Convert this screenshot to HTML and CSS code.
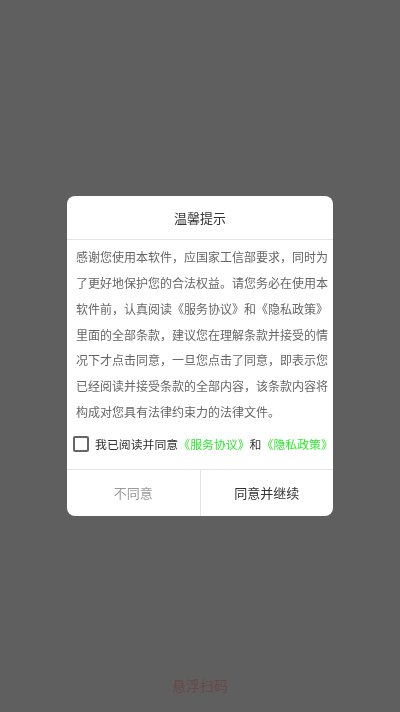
FILE: index.html
```html
<!DOCTYPE html>
<html lang="zh">
<head>
<meta charset="utf-8">
<meta name="viewport" content="width=device-width, initial-scale=1">
<link rel="stylesheet" href="styles.css">
</head>
<body>
<div class="page">
  <div class="scan">悬浮扫码</div>
</div>
<div class="overlay">
  <div class="dialog">
    <div class="title">温馨提示</div>
    <div class="content">
      <p class="text">感谢您使用本软件，应国家工信部要求，同时为了更好地保护您的合法权益。请您务必在使用本软件前，认真阅读《服务协议》和《隐私政策》里面的全部条款，建议您在理解条款并接受的情况下才点击同意，一旦您点击了同意，即表示您已经阅读并接受条款的全部内容，该条款内容将构成对您具有法律约束力的法律文件。</p>
      <label class="agree">
        <span class="box"></span>
        <span class="agree-text">我已阅读并同意<span class="link">《服务协议》</span>和<span class="link">《隐私政策》</span></span>
      </label>
    </div>
    <div class="actions">
      <div class="btn btn-cancel">不同意</div>
      <div class="btn btn-ok">同意并继续</div>
    </div>
  </div>
</div>
</body>
</html>
```
FILE: styles.css
```css
* { box-sizing: border-box; }
html, body {
  margin: 0;
  padding: 0;
  height: 100%;
}
body {
  background: #5f5f5f;
  font-family: "Noto Sans CJK SC", "Noto Sans", sans-serif;
  overflow: hidden;
}
.page {
  height: 712px;
  display: flex;
  flex-direction: column;
  justify-content: flex-end;
  align-items: center;
  padding-bottom: 17px;
}
.scan {
  color: #6a4848;
  font-size: 14px;
  line-height: 20px;
}
.overlay {
  position: fixed;
  left: 0;
  top: 0;
  width: 100%;
  height: 712px;
  display: flex;
  align-items: center;
  justify-content: center;
}
.dialog {
  width: 266px;
  background: #fff;
  border-radius: 8px;
  overflow: hidden;
}
.title {
  height: 44px;
  line-height: 43px;
  text-align: center;
  font-size: 13px;
  color: #333;
  border-bottom: 1px solid #e4e4e4;
}
.content {
  padding: 4px 4px 0 9px;
}
.text {
  margin: 0;
  font-size: 12px;
  line-height: 25.8px;
  color: #666;
}
.agree {
  display: flex;
  align-items: center;
  height: 44px;
  padding-bottom: 6px;
}
.box {
  width: 16px;
  height: 16px;
  border: 2px solid #666;
  border-radius: 2px;
  margin-left: -3px;
  margin-right: 6px;
  flex: none;
}
.agree-text {
  font-size: 11.9px;
  color: #333;
  white-space: nowrap;
}
.link {
  color: #2ee62e;
}
.actions {
  display: flex;
  height: 47px;
  border-top: 1px solid #e4e4e4;
}
.btn {
  flex: 1;
  display: flex;
  align-items: center;
  justify-content: center;
  font-size: 13px;
}
.btn-cancel {
  color: #999;
  border-right: 1px solid #e4e4e4;
}
.btn-ok {
  color: #333;
}
```
